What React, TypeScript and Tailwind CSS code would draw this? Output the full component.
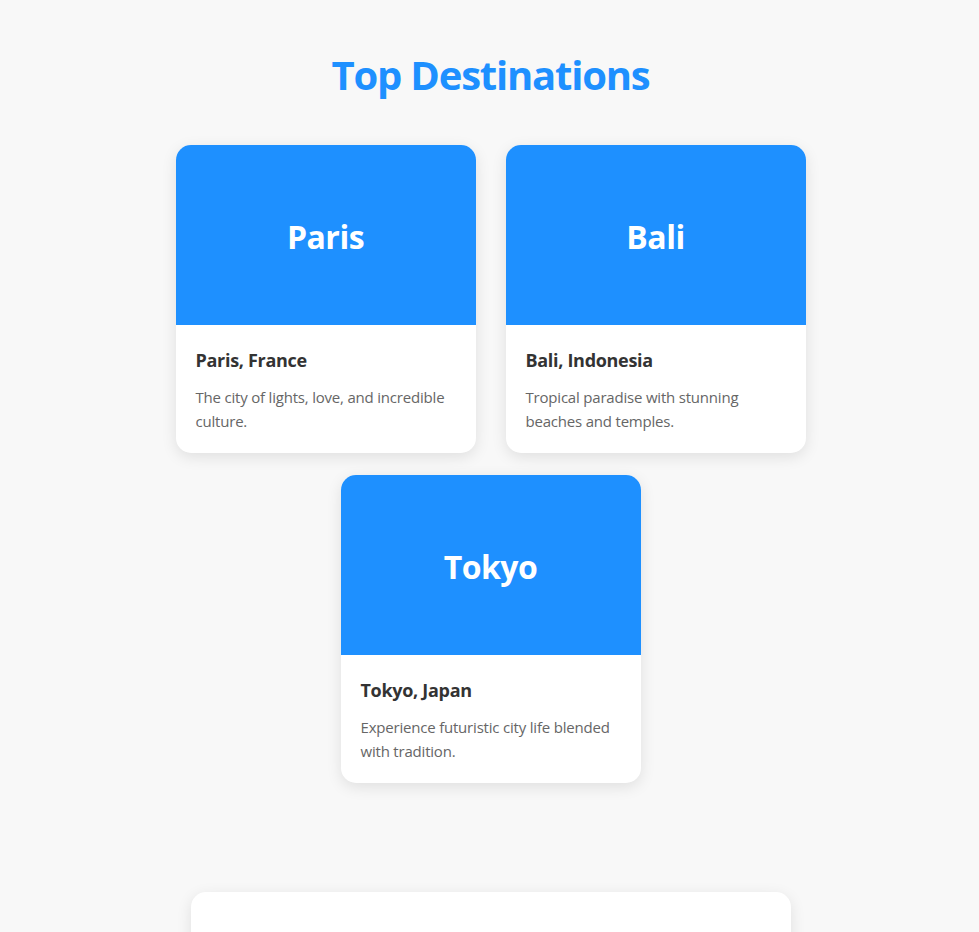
import React from "react";

interface Destination {
  name: string;
  title: string;
  description: string;
}

const destinations: Destination[] = [
  {
    name: "Paris",
    title: "Paris, France",
    description: "The city of lights, love, and incredible culture.",
  },
  {
    name: "Bali",
    title: "Bali, Indonesia",
    description: "Tropical paradise with stunning beaches and temples.",
  },
  {
    name: "Tokyo",
    title: "Tokyo, Japan",
    description: "Experience futuristic city life blended with tradition.",
  },
];

const DestinationCard = ({ destination }: { destination: Destination }) => {
  return (
    <div className="w-[300px] rounded-[15px] bg-white overflow-hidden shadow-[0_4px_15px_rgba(0,0,0,0.1)]">
      <div className="h-[180px] bg-[#1e90ff] flex items-center justify-center pt-[4px]">
        <span className="text-[32px] font-bold text-white tracking-[-0.5px]">{destination.name}</span>
      </div>
      <div className="p-5">
        <h3 className="text-[18px] leading-[31px] font-bold text-[#333] mb-[9px] tracking-[-0.3px]">
          {destination.title}
        </h3>
        <p className="text-[15px] leading-[24px] text-[#666] tracking-[-0.2px]">
          {destination.description}
        </p>
      </div>
    </div>
  );
};

const App = () => {
  return (
    <div
      className="min-h-screen bg-[#f8f8f8] pt-[48px] pl-[2px]"
      style={{ fontFamily: '"Open Sans", "Noto Sans", sans-serif' }}
    >
      <h1 className="text-center text-[40px] leading-[54px] font-bold text-[#1e90ff] mb-[43px] tracking-[-1.2px]">
        Top Destinations
      </h1>
      <div className="mx-auto w-[660px] flex flex-wrap justify-center gap-x-[30px] gap-y-[22px]">
        {destinations.map((destination, index) => (
          <DestinationCard key={index} destination={destination} />
        ))}
      </div>
      <div className="mt-[109px] mx-auto w-[600px] h-[200px] bg-white rounded-[15px] shadow-[0_4px_15px_rgba(0,0,0,0.1)]"></div>
    </div>
  );
};

export default App;
